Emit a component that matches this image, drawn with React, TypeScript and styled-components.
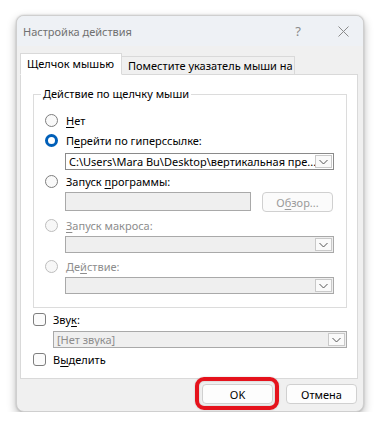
import React from "react";
import styled, { createGlobalStyle, css } from "styled-components";

const Global = createGlobalStyle`
  html, body { margin: 0; padding: 0; background: #ffffff; }
  body { font-family: "Noto Sans", "Segoe UI", sans-serif; font-size: 11px; color: #1b1b1b; }
  * { box-sizing: border-box; }
`;

const Window = styled.div`
  margin: 15px 0 0 16px;
  width: 348px;
  height: 397px;
  border-radius: 8px;
  background: #f0f0f0;
  border: 1px solid #cfcfcf;
  box-shadow: 0 4px 10px rgba(0, 0, 0, 0.28), 0 0 2px rgba(0, 0, 0, 0.2);
  overflow: hidden;
  display: flex;
  flex-direction: column;
`;

const TitleBar = styled.div`
  height: 30px;
  flex: none;
  background: #eef1f5;
  display: flex;
  align-items: center;
  padding-left: 6px;
`;

const TitleText = styled.div`
  flex: 1;
  color: #707070;
  font-size: 11px;
`;

const TitleButton = styled.div<{ $w: number }>`
  width: ${(p) => p.$w}px;
  height: 30px;
  display: flex;
  align-items: center;
  justify-content: center;
  color: #8a8a8a;
  font-size: 13px;
`;

const Body = styled.div`
  padding: 7px 6px 0 3px;
  display: flex;
  flex-direction: column;
`;

const Tabs = styled.div`
  display: flex;
  align-items: flex-end;
  height: 21px;
  position: relative;
  z-index: 1;
`;

const Tab = styled.div<{ $active?: boolean }>`
  display: flex;
  align-items: center;
  padding: 0 6px;
  border: 1px solid #d9d9d9;
  font-size: 11px;
  color: #000;
  white-space: nowrap;
  ${(p) =>
    p.$active
      ? css`
          height: 22px;
          margin-bottom: -1px;
          background: #ffffff;
          border-bottom-color: #ffffff;
          padding-bottom: 1px;
          width: 102px;
        `
      : css`
          height: 18px;
          background: #f0f0f0;
          border-left: none;
          border-bottom: none;
          width: 173px;
        `}
`;

const Panel = styled.div`
  width: 338px;
  height: 305px;
  background: #ffffff;
  border: 1px solid #d9d9d9;
  padding: 11px 10px 0 12px;
  display: flex;
  flex-direction: column;
  align-items: stretch;
`;

const Group = styled.fieldset`
  margin: 0;
  padding: 0 12px 0 11px;
  border: 1px solid #dcdcdc;
  min-width: 0;
  height: 222px;
  display: flex;
  flex-direction: column;
`;

const Legend = styled.legend`
  padding: 0 2px;
  margin-left: -4px;
  font-size: 11px;
  color: #000;
  line-height: 16px;
`;

const Row = styled.div<{ $mt?: number; $indent?: number }>`
  display: flex;
  align-items: center;
  height: 20px;
  margin-top: ${(p) => p.$mt ?? 0}px;
  margin-left: ${(p) => p.$indent ?? 0}px;
  flex: none;
`;

const Label = styled.span<{ $disabled?: boolean }>`
  color: ${(p) => (p.$disabled ? "#8d8d8d" : "#000")};
  font-size: 11px;
  white-space: nowrap;
  u { text-underline-offset: 2px; }
`;

const RadioCircle = styled.span<{ $checked?: boolean; $disabled?: boolean }>`
  width: 13px;
  height: 13px;
  border-radius: 50%;
  flex: none;
  margin-right: 8px;
  ${(p) =>
    p.$checked
      ? css`
          background: #ffffff;
          border: 3.5px solid #005fb8;
        `
      : css`
          background: ${p.$disabled ? "#f7f7f7" : "#f9f9f9"};
          border: 1px solid ${p.$disabled ? "#bdbdbd" : "#7e7e7e"};
        `}
`;

const CheckBox = styled.span`
  width: 13px;
  height: 13px;
  border-radius: 3px;
  border: 1px solid #7e7e7e;
  background: #fbfbfb;
  flex: none;
  margin-right: 7px;
`;

const Combo = styled.div<{ $mt?: number; $indent?: number; $disabled?: boolean; $w?: number }>`
  flex: none;
  display: flex;
  align-items: stretch;
  height: 17px;
  ${(p) => (p.$w ? `width: ${p.$w}px;` : "")}
  margin-top: ${(p) => p.$mt ?? 0}px;
  margin-left: ${(p) => p.$indent ?? 0}px;
  border: 1px solid ${(p) => (p.$disabled ? "#a9a9a9" : "#8a8a8a")};
  background: ${(p) => (p.$disabled ? "#efefef" : "#ffffff")};
  padding: 1px;
`;

const ComboText = styled.div<{ $disabled?: boolean }>`
  flex: 1;
  display: flex;
  align-items: center;
  padding-left: 2px;
  font-size: 11px;
  color: ${(p) => (p.$disabled ? "#8d8d8d" : "#000")};
  white-space: nowrap;
  overflow: hidden;
`;

const ComboButton = styled.div`
  width: 17px;
  flex: none;
  border: 1px solid #c9c9c9;
  background: #fafafa;
  display: flex;
  align-items: center;
  justify-content: center;
`;

const ProgramRow = styled.div`
  display: flex;
  align-items: flex-start;
  margin-left: 20px;
  margin-top: 1px;
  gap: 11px;
  flex: none;
`;

const TextBox = styled.div`
  width: 186px;
  height: 19px;
  border: 1px solid #a9a9a9;
  background: #efefef;
`;

const Button = styled.div<{ $disabled?: boolean; $w?: number }>`
  width: ${(p) => p.$w ?? 71}px;
  height: 20px;
  border: 1px solid #d0d0d0;
  border-radius: 4px;
  background: ${(p) => (p.$disabled ? "#fbfbfb" : "#fdfdfd")};
  display: flex;
  align-items: center;
  justify-content: center;
  font-size: 11px;
  color: ${(p) => (p.$disabled ? "#9a9a9a" : "#000")};
  position: relative;
  u { text-underline-offset: 2px; }
`;

const Highlight = styled.div`
  position: absolute;
  left: -8px;
  top: -8px;
  right: -7px;
  bottom: -7px;
  border: 4px solid #e5121c;
  border-radius: 9px;
  box-shadow: inset 0 0 2px rgba(0, 0, 0, 0.25), 0 0 2px rgba(0, 0, 0, 0.2);
  pointer-events: none;
`;

const Footer = styled.div`
  display: flex;
  justify-content: flex-end;
  gap: 13px;
  padding: 5px 0 0 0;
`;

const Chevron = () => (
  <svg width="9" height="6" viewBox="0 0 9 6">
    <path d="M0.5 1 L4.5 5 L8.5 1" fill="none" stroke="#555" strokeWidth="1" />
  </svg>
);

const CloseIcon = () => (
  <svg width="11" height="11" viewBox="0 0 11 11">
    <path d="M0.5 0.5 L10.5 10.5 M10.5 0.5 L0.5 10.5" stroke="#8a8a8a" strokeWidth="1" />
  </svg>
);

export default function App() {
  return (
    <>
      <Global />
      <Window>
        <TitleBar>
          <TitleText>Настройка действия</TitleText>
          <TitleButton $w={50}>?</TitleButton>
          <TitleButton $w={40}>
            <CloseIcon />
          </TitleButton>
        </TitleBar>
        <Body>
          <Tabs>
            <Tab $active>Щелчок мышью</Tab>
            <Tab>Поместите указатель мыши на</Tab>
          </Tabs>
          <Panel>
            <Group>
              <Legend>Действие по щелчку мыши</Legend>
              <Row $mt={8}>
                <RadioCircle />
                <Label>
                  <u>Н</u>ет
                </Label>
              </Row>
              <Row>
                <RadioCircle $checked />
                <Label>
                  П<u>е</u>рейти по гиперссылке:
                </Label>
              </Row>
              <Combo $mt={3} $indent={20} $w={269}>
                <ComboText>C:\Users\Mara Bu\Desktop\вертикальная пре...</ComboText>
                <ComboButton>
                  <Chevron />
                </ComboButton>
              </Combo>
              <Row $mt={1}>
                <RadioCircle />
                <Label>
                  Запуск <u>п</u>рограммы:
                </Label>
              </Row>
              <ProgramRow>
                <TextBox />
                <Button $disabled>
                  О<u>б</u>зор...
                </Button>
              </ProgramRow>
              <Row $mt={3}>
                <RadioCircle $disabled />
                <Label $disabled>
                  <u>З</u>апуск макроса:
                </Label>
              </Row>
              <Combo $mt={1} $indent={20} $w={269} $disabled>
                <ComboText $disabled />
                <ComboButton>
                  <Chevron />
                </ComboButton>
              </Combo>
              <Row $mt={3}>
                <RadioCircle $disabled />
                <Label $disabled>
                  Де<u>й</u>ствие:
                </Label>
              </Row>
              <Combo $mt={1} $indent={20} $w={269} $disabled>
                <ComboText $disabled />
                <ComboButton>
                  <Chevron />
                </ComboButton>
              </Combo>
            </Group>
            <Row $mt={1}>
              <CheckBox />
              <Label>
                Зву<u>к</u>:
              </Label>
            </Row>
            <Combo $mt={2} $indent={20} $w={294} $disabled>
              <ComboText $disabled>[Нет звука]</ComboText>
              <ComboButton>
                <Chevron />
              </ComboButton>
            </Combo>
            <Row $mt={1}>
              <CheckBox />
              <Label>
                В<u>ы</u>делить
              </Label>
            </Row>
          </Panel>
          <Footer>
            <Button>
              OK
              <Highlight />
            </Button>
            <Button>Отмена</Button>
          </Footer>
        </Body>
      </Window>
    </>
  );
}
